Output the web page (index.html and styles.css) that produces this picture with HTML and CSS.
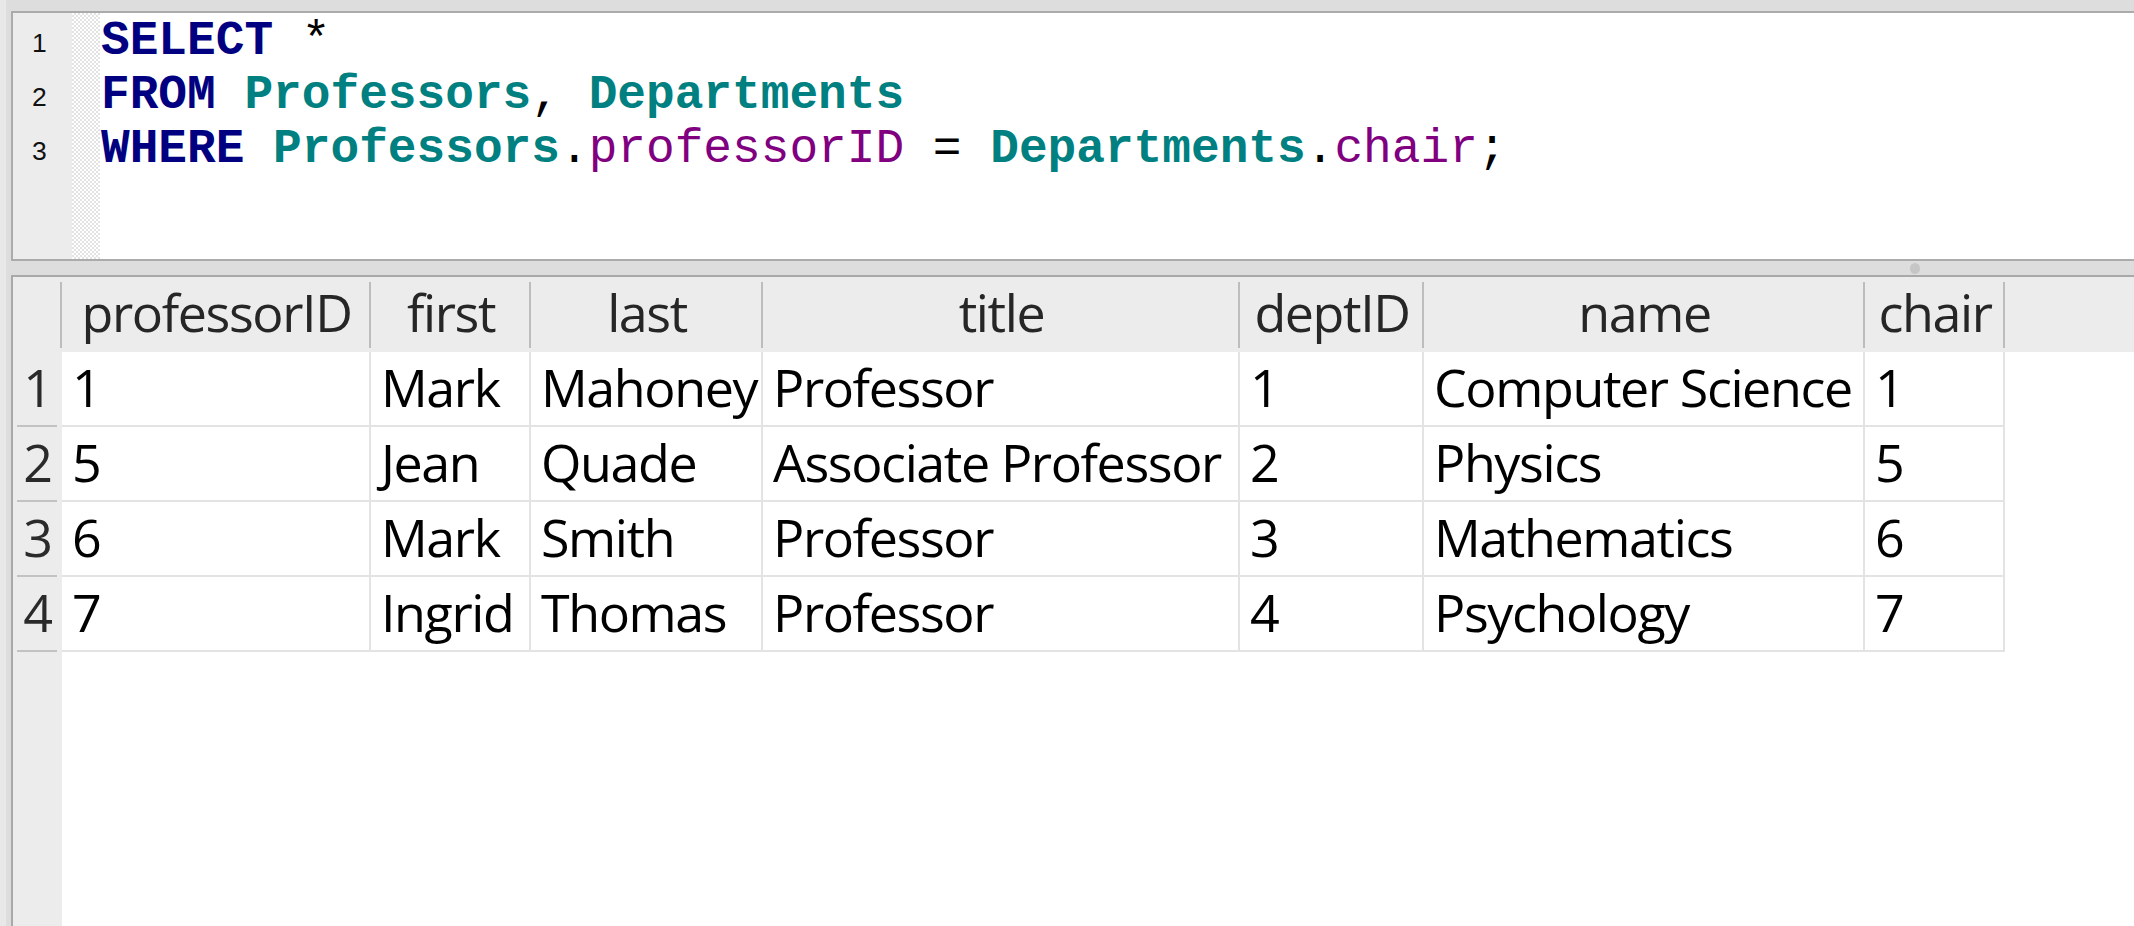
FILE: index.html
```html
<!DOCTYPE html>
<html>
<head>
<meta charset="utf-8">
<link rel="stylesheet" href="styles.css">
</head>
<body>
<div class="window">
  <div class="editor">
    <div class="gutter">
      <div class="ln">1</div>
      <div class="ln">2</div>
      <div class="ln">3</div>
    </div>
    <div class="fold"></div>
    <pre class="code"><span class="kw">SELECT</span> *
<span class="kw">FROM</span> <span class="tb">Professors</span>, <span class="tb">Departments</span>
<span class="kw">WHERE</span> <span class="tb">Professors</span>.<span class="col">professorID</span> = <span class="tb">Departments</span>.<span class="col">chair</span>;</pre>
  </div>
  <div class="splitter"><span class="grip"></span></div>
  <div class="results">
    <div class="thead">
      <div class="th"></div>
      <div class="th">professorID</div>
      <div class="th">first</div>
      <div class="th">last</div>
      <div class="th">title</div>
      <div class="th">deptID</div>
      <div class="th">name</div>
      <div class="th">chair</div>
      <div class="th-fill"></div>
    </div>
    <div class="tr">
      <div class="rn">1</div>
      <div class="td">1</div>
      <div class="td">Mark</div>
      <div class="td">Mahoney</div>
      <div class="td">Professor</div>
      <div class="td">1</div>
      <div class="td">Computer Science</div>
      <div class="td">1</div>
      <div class="fill"></div>
    </div>
    <div class="tr">
      <div class="rn">2</div>
      <div class="td">5</div>
      <div class="td">Jean</div>
      <div class="td">Quade</div>
      <div class="td">Associate Professor</div>
      <div class="td">2</div>
      <div class="td">Physics</div>
      <div class="td">5</div>
      <div class="fill"></div>
    </div>
    <div class="tr">
      <div class="rn">3</div>
      <div class="td">6</div>
      <div class="td">Mark</div>
      <div class="td">Smith</div>
      <div class="td">Professor</div>
      <div class="td">3</div>
      <div class="td">Mathematics</div>
      <div class="td">6</div>
      <div class="fill"></div>
    </div>
    <div class="tr">
      <div class="rn">4</div>
      <div class="td">7</div>
      <div class="td">Ingrid</div>
      <div class="td">Thomas</div>
      <div class="td">Professor</div>
      <div class="td">4</div>
      <div class="td">Psychology</div>
      <div class="td">7</div>
      <div class="fill"></div>
    </div>
  </div>
</div>
</body>
</html>
```
FILE: styles.css
```css
html, body {
  margin: 0;
  padding: 0;
  overflow: hidden;
}

.window {
  height: 926px;
  box-sizing: border-box;
  padding: 11px 0 0 5px;
  border-left: 6px solid #e8e8e8;
  background: #dddddd;
  display: flex;
  flex-direction: column;
}

/* SQL editor */
.editor {
  height: 250px;
  flex: none;
  box-sizing: border-box;
  border: 2px solid #ababab;
  border-right: none;
  background: #ffffff;
  display: flex;
}

.gutter {
  width: 59px;
  flex: none;
  box-sizing: border-box;
  background: #ececec;
  padding: 3px 0 0 19px;
  font-family: "Liberation Sans", Arial, sans-serif;
  font-size: 26.5px;
  line-height: 54px;
  color: #111111;
}

.fold {
  width: 28px;
  flex: none;
  background: repeating-conic-gradient(#e3e3e3 0 25%, #ffffff 0 50%) 0 0 / 4px 4px;
}

.code {
  margin: 0;
  padding: 1px 0 0 1px;
  font-family: "Liberation Mono", "Courier New", monospace;
  font-size: 47.8px;
  line-height: 54px;
  color: #000000;
  white-space: pre;
}

.kw {
  color: #000080;
  font-weight: bold;
}

.tb {
  color: #008080;
  font-weight: bold;
}

.col {
  color: #800080;
}

/* splitter */
.splitter {
  height: 14px;
  flex: none;
  display: flex;
  align-items: center;
}

.grip {
  width: 10px;
  height: 11px;
  border-radius: 50%;
  background: #c6c6c6;
  margin-left: 1899px;
}

/* results table */
.results {
  flex: 1;
  border-top: 2px solid #a9a9a9;
  border-left: 2px solid #a9a9a9;
  background: linear-gradient(to right, #ececec 49px, #ffffff 49px);
  font-family: "Open Sans", "Liberation Sans", sans-serif;
  font-size: 52px;
  letter-spacing: -1.4px;
}

.thead,
.tr {
  display: grid;
  grid-template-columns: 49px 309px 160px 232px 477px 184px 441px 140px 1fr;
}

.thead {
  height: 75px;
  background: #ececec;
}

.th {
  background: linear-gradient(#bdbdbd, #bdbdbd) right center / 2px 66px no-repeat;
  text-align: center;
  line-height: 70px;
  color: #262626;
  white-space: nowrap;
}

.tr {
  height: 75px;
}

.td {
  box-sizing: border-box;
  background: #ffffff;
  border-right: 2px solid #e3e3e3;
  border-bottom: 2px solid #e3e3e3;
  padding-left: 10px;
  line-height: 70px;
  color: #000000;
  white-space: nowrap;
}

.rn {
  box-sizing: border-box;
  background: linear-gradient(#c2c2c2, #c2c2c2) 4px bottom / 40px 2px no-repeat, #ececec;
  text-align: center;
  line-height: 70px;
  color: #2a2a2a;
}

.fill {
  background: #ffffff;
}
```
